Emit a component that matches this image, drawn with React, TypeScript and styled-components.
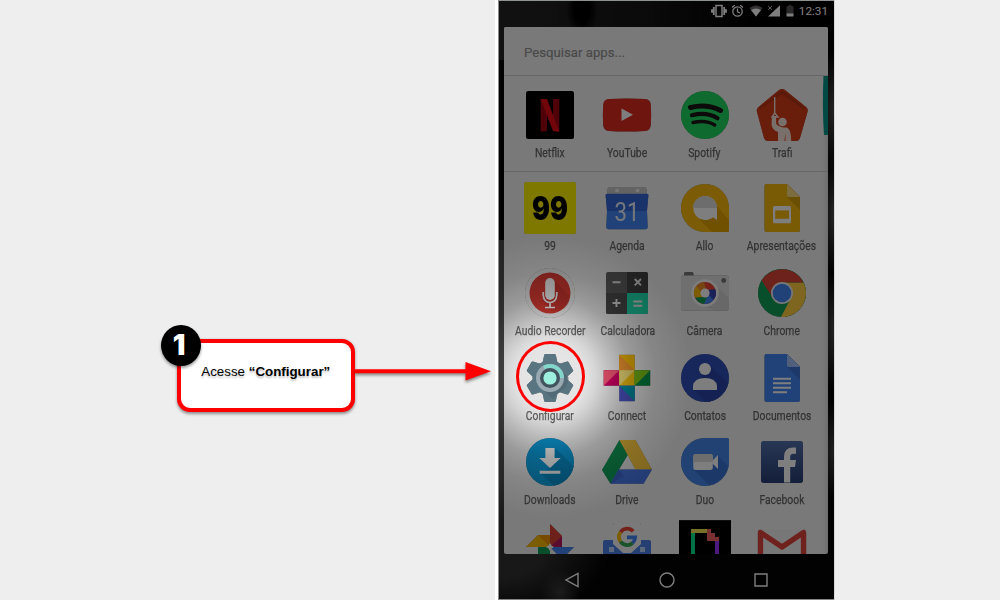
import React from "react";
import styled, { createGlobalStyle } from "styled-components";

const GlobalStyle = createGlobalStyle`
  * { box-sizing: border-box; }
  body { margin: 0; background: #eeeeee; overflow: hidden; }
`;

const Page = styled.main`
  display: grid;
  grid-template-columns: 495px 340px;
  width: 1000px;
  height: 600px;
  background: #eeeeee;
  font-family: Roboto, sans-serif;
`;

const Guide = styled.section`
  position: relative;
  z-index: 2;
  display: flex;
  align-items: flex-start;
  padding: 339px 0 0 177px;
`;

const Callout = styled.div`
  position: relative;
  flex: none;
  display: flex;
  align-items: center;
  justify-content: center;
  width: 177.5px;
  height: 72.5px;
  padding-bottom: 7px;
  background: #fff;
  border: 4px solid #ff0000;
  border-radius: 13px;
  box-shadow: 0 1.5px 3px rgba(0, 0, 0, 0.4);
`;

const CalloutText = styled.p`
  margin: 0;
  font: 13.35px "Liberation Sans", sans-serif;
  color: #000;
  white-space: nowrap;
  text-shadow: 0 2px 2px rgba(0, 0, 0, 0.25);
`;

const StepBadge = styled.span`
  position: absolute;
  left: -20px;
  top: -18px;
  display: flex;
  align-items: center;
  justify-content: center;
  width: 40px;
  height: 41px;
  padding: 0 4px 2px 0;
  border-radius: 50%;
  background: #000;
  color: #fff;
  font: 900 28px Inter, sans-serif;
  box-shadow: 0 2px 3px rgba(0, 0, 0, 0.4);
`;

const Arrow = styled.svg`
  flex: none;
  width: 137px;
  height: 26px;
  margin-top: 20px;
  filter: drop-shadow(0 2px 1.5px rgba(0, 0, 0, 0.45));
`;

const Phone = styled.section`
  position: relative;
  display: flex;
  flex-direction: column;
  height: 600px;
  overflow: hidden;
  border-left: 3px solid #fff;
  border-right: 1px solid #d8d8d8;
  background:
    radial-gradient(ellipse 20px 24px at 62px 592px, #383838, transparent),
    radial-gradient(ellipse 110px 70px at 0 550px, #303030 40%, transparent),
    radial-gradient(ellipse 12px 60px at 336px 215px, #4c4c4c, transparent),
    radial-gradient(ellipse 14px 60px at 336px 330px, #484848, transparent),
    radial-gradient(ellipse 14px 50px at 336px 450px, #404040, transparent),
    radial-gradient(ellipse 16px 60px at 336px 110px, #484848, transparent),
    linear-gradient(90deg, #484848 0 8px, transparent 8px) 0 240px / 100% 320px no-repeat,
    radial-gradient(ellipse 16px 26px at 84px 10px, #000 50%, transparent),
    linear-gradient(90deg, #242424, #141414 45%, #000 75%) 0 0 / 100% 60px no-repeat,
    #030303;
`;

const StatusBar = styled.header`
  display: flex;
  align-items: center;
  justify-content: flex-end;
  height: 26.5px;
  padding: 0 6px 4.5px 0;
  color: #fff;
  font-size: 11.8px;
  letter-spacing: -0.05px;
`;

const StatusIcons = styled.svg`
  width: 86px;
  height: 16px;
  margin-right: 2px;
`;

const Drawer = styled.div`
  position: relative;
  display: flex;
  flex-direction: column;
  height: 527px;
  margin: 0 6px 0 6px;
  overflow: hidden;
  border-radius: 2px;
  background: linear-gradient(90deg, #f5f5f5 0 318px, #e4e4e4 323px, #dadada);
`;

const Search = styled.div`
  flex: none;
  height: 49.5px;
  padding: 17px 20px;
  border-bottom: 1px solid #cecece;
  color: #949494;
  background: #f5f5f5;
  font-size: 13.2px;
  line-height: 17px;
  -webkit-text-stroke: 0.2px #949494;
`;

const ScrollThumb = styled.svg`
  position: absolute;
  right: 0;
  top: 49.5px;
  width: 6px;
  height: 59px;
`;

const AppGrid = styled.div<{ $suggested?: boolean }>`
  flex: none;
  display: grid;
  grid-template-columns: repeat(4, 77.25px);
  grid-auto-rows: 84.8px;
  justify-content: center;
  padding-top: ${(p) => (p.$suggested ? 11 : 8)}px;
  height: ${(p) => (p.$suggested ? "96px" : "auto")};
  border-bottom: ${(p) => (p.$suggested ? "1px solid #cecece" : "0")};
`;

const AppTile = styled.div`
  display: flex;
  flex-direction: column;
  align-items: center;
`;

const Icon = styled.svg`
  flex: none;
  width: 56px;
  height: 56px;
  filter: drop-shadow(0 0.7px 0.6px rgba(0, 0, 0, 0.45));
`;

const Label = styled.span`
  margin-top: 3px;
  font-size: 12.4px;
  line-height: 14px;
  white-space: nowrap;
  color: #666;
  -webkit-text-stroke: 0.25px #666;
  transform: scaleX(0.835);
`;

const NavBar = styled.nav`
  display: flex;
  justify-content: space-between;
  align-items: center;
  height: 46.5px;
  padding: 6px 65px 0 66px;
`;

const NavIcon = styled.svg`
  width: 16px;
  height: 16px;
  fill: none;
  stroke: #fff;
  stroke-width: 1.4;
`;

const Dim = styled.div`
  position: absolute;
  inset: 0;
  border-top: 1px solid #8e9290;
  border-bottom: 1px solid #858585;
  border-left: 1px solid #8a8a8a;
  background: radial-gradient(
    circle 140px at 52px 376px,
    rgba(0, 0, 0, 0.06) 0%,
    rgba(0, 0, 0, 0.07) 24%,
    rgba(0, 0, 0, 0.13) 32%,
    rgba(0, 0, 0, 0.24) 43%,
    rgba(0, 0, 0, 0.37) 57%,
    rgba(0, 0, 0, 0.455) 75%,
    rgba(0, 0, 0, 0.505) 100%
  );
`;

const Highlight = styled.div`
  position: absolute;
  left: 18px;
  top: 341px;
  width: 69px;
  height: 71px;
  border: 3px solid #ff0000;
  border-radius: 50%;
`;

const Mark = ({ children }: { children: React.ReactNode }) => (
  <Icon viewBox="-28 -28 56 56">{children}</Icon>
);

const gearTooth = "M-4.5-24H4.5Q5.5-24 5.8-23L7.8-14H-7.8L-5.8-23Q-5.5-24-4.5-24Z";

const Sheet = ({ fill, fold }: { fill: string; fold: string }) => (
  <>
    <path d="M-15.5-24H5L18-11V22Q18 24 16 24H-15.5Q-17.5 24-17.5 22V-22Q-17.5-24-15.5-24Z" fill={fill} />
    <path d="M5-11L18 2V-11Z" fill="#000" opacity=".13" />
    <path d="M5-24L18-11H7Q5-11 5-13Z" fill={fold} />
  </>
);

type AppEntry = { name?: string; icon: React.ReactNode };

const suggested: AppEntry[] = [
  {
    name: "Netflix",
    icon: (
      <>
        <rect x="-24" y="-24" width="48" height="48" rx="2.5" fill="#000" />
        <path d="M-9.3-16H-3V16L-9.3 16.8ZM3-16H9.3V16.8L3 16Z" fill="#a00610" />
        <path d="M-9.3-16H-3L9.3 16.8L3 16Z" fill="#e50914" />
      </>
    ),
  },
  {
    name: "YouTube",
    icon: (
      <>
        <path d="M-18-16Q0-17 18-16Q23.5-15.5 23.8-10Q24.5 0 23.8 10Q23.5 15.5 18 16Q0 17-18 16Q-23.5 15.5-23.8 10Q-24.5 0-23.8-10Q-23.5-15.5-18-16Z" fill="#e02a20" />
        <path d="M-5.5-6.5V6L6-.2Z" fill="#fff" />
      </>
    ),
  },
  {
    name: "Spotify",
    icon: (
      <>
        <circle r="24" fill="#1ed760" />
        <g fill="none" stroke="#191414" strokeLinecap="round">
          <path d="M-14.5-7.5Q2-11.5 15.5-4.5" strokeWidth="5" />
          <path d="M-13 .2Q2-3.3 12.5 3.2" strokeWidth="4.2" />
          <path d="M-12 7.5Q1 4.5 9.7 10" strokeWidth="3.4" />
        </g>
      </>
    ),
  },
  {
    name: "Trafi",
    icon: (
      <>
        <path d="M-3-25Q0-27 3-25L24-8Q26.5-6 25.5-3L18 23Q17 26 14 26H-14Q-17 26-18 23L-25-3Q-26-6-23.5-8Z" fill="#d53a16" />
        <path d="M-23-7L0-25L24-7L21-6L0-21L-21-6Z" fill="#b73514" />
        <path d="M-7.3-18V-2M-7.3-2L-10 2H-4Z" fill="none" stroke="#f5e0d9" strokeWidth="1.4" />
        <circle cx=".5" cy="7" r="4.3" fill="#f5e0d9" />
        <path d="M-10 1L-6 1L-5.8 9Q-3 12 1 12.5H5Q9 14 9.2 26H3.5V18L2.5 26H-4V17Q-10 15-10.5 9Z" fill="#f5e0d9" />
      </>
    ),
  },
];

const installed: AppEntry[] = [
  {
    name: "99",
    icon: (
      <>
        <rect x="-26" y="-26" width="52" height="52" rx="2.5" fill="#fff200" />
        <text x="-18" y="12" fontFamily="Inter, sans-serif" fontWeight="900" fontSize="32.5" textLength="36" lengthAdjust="spacingAndGlyphs" fill="#000">99</text>
      </>
    ),
  },
  {
    name: "Agenda",
    icon: (
      <>
        <path d="M-19.5-18Q-19.5-21-17-21H17Q19.5-21 19.5-18V-12H-19.5Z" fill="#c8c8c8" />
        <circle cx="-10" cy="-17.5" r="1.8" fill="#f3f3f3" />
        <circle cx="10.5" cy="-17.5" r="1.8" fill="#f3f3f3" />
        <path d="M-19.5-14.2H19.5Q22-14 21.3-11.5L20 3H-20L-21.3-11.5Q-22-14-19.5-14.2Z" fill="#3367d6" />
        <path d="M-20 3H20L20.7 19Q20.7 21.3 18.5 21.3H-18.5Q-20.7 21.3-20.7 19Z" fill="#4285f4" />
        <text x="-12.5" y="12.6" fontFamily="Roboto, sans-serif" fontWeight="400" fontSize="25" textLength="25" lengthAdjust="spacingAndGlyphs" fill="#e8effd">31</text>
      </>
    ),
  },
  {
    name: "Allo",
    icon: (
      <>
        <path d="M0-24A24 24 0 0 1 24 0V22Q24 24 22 24H0A24 24 0 0 1 0-24Z" fill="#fbb90c" />
        <path d="M-8 9L7 24H22Q24 24 24 22V12L10-4V10Z" fill="#e3a400" />
        <path d="M0-12A12 12 0 0 1 12 0V12L8 9.2A12 12 0 1 1 0-12Z" fill="#fff" />
        <path d="M-12 0A12 12 0 0 1 12 0Z" fill="#ddd" />
      </>
    ),
  },
  {
    name: "Apresentações",
    icon: (
      <>
        <Sheet fill="#f5b70b" fold="#fada80" />
        <rect x="-9" y="-2" width="18" height="17.3" rx="1.5" fill="#fff" />
        <rect x="-6.8" y="2.4" width="13.8" height="8.4" fill="#f5b70b" />
      </>
    ),
  },
  {
    name: "Audio Recorder",
    icon: (
      <>
        <circle r="25" fill="#f3f3f3" />
        <circle r="20.5" fill="#de3c34" />
        <path d="M4-13L19 2Q22 13 8 18L0 17L-7 8Z" fill="#a82924" opacity=".35" />
        <rect x="-4.8" y="-15" width="9.6" height="22" rx="4.8" fill="#fff" />
        <path d="M-6.8-1V2Q-6 9.5 0 9.5Q6 9.5 6.8 2V-1M0 9V14M-5 14.5H5" fill="none" stroke="#fff" strokeWidth="1.7" />
      </>
    ),
  },
  {
    name: "Calculadora",
    icon: (
      <>
        <rect x="-21" y="-21" width="42" height="42" rx="2.5" fill="#616161" />
        <path d="M0-21H18.5Q21-21 21-18.5V0H0Z" fill="#424242" />
        <path d="M-21 0H0V21H-18.5Q-21 21-21 18.5Z" fill="#4d4d4d" />
        <path d="M0 0H21V18.5Q21 21 18.5 21H0Z" fill="#1dd9aa" />
        <path d="M-14.5-10.8H-6.5M-14.5 10H-6.5M-10.5 6V14M7.7-14L14-7.7M14-14L7.7-7.7M6.3 8.5H15.3M6.3 12.7H15.3" stroke="#e8e8e8" strokeWidth="1.9" />
      </>
    ),
  },
  {
    name: "Câmera",
    icon: (
      <>
        <path d="M-21-14V-19Q-21-21-19-21H-13.5Q-11.5-21-11.5-19V-14Z" fill="#757575" />
        <rect x="-24" y="-17.5" width="48" height="35" rx="2.5" fill="#e0e0e0" />
        <path d="M10-8L24 5V15Q24 17.5 21.5 17.5H9L-8 10Z" fill="#d2d2d2" />
        <circle r="13.7" fill="#fafafa" />
        <circle r="11" fill="#ea4335" />
        <path d="M4-3L10.2-4A11 11 0 0 1 8.5 7L4 4Z" fill="#3445b4" />
        <path d="M4 2L8.5 7A11 11 0 0 1-1 11L0 4Z" fill="#4285f4" />
        <path d="M2 4L-1 11A11 11 0 0 1-10 4.5L-3 3Z" fill="#0f9d58" />
        <path d="M-2 4L-10 4.5A11 11 0 0 1-8.5-7L-4-2Z" fill="#fbbc05" />
        <path d="M-4-1L-8.5-7A11 11 0 0 1-1-11L1-4Z" fill="#ef8b24" />
        <circle r="4.6" fill="#fff" />
        <circle cx="18.7" cy="-12.5" r="2.4" fill="#757575" />
      </>
    ),
  },
  {
    name: "Chrome",
    icon: (
      <>
        <circle r="24" fill="#0f9d58" />
        <path d="M0-10.5H21.5A24 24 0 0 1-1 24L9 5Z" fill="#ffcd40" />
        <path d="M-20.4-12.5A24 24 0 0 1 21.5-10.5H0L-9 5Z" fill="#db4437" />
        <circle r="11" fill="#f1f1f1" />
        <circle r="9.3" fill="#4285f4" />
      </>
    ),
  },
  {
    name: "Configurar",
    icon: (
      <>
        <g fill="#607d8b">
          {[0, 60, 120, 180, 240, 300].map((a) => (
            <path key={a} d={gearTooth} transform={`rotate(${a})`} />
          ))}
          <circle r="17.5" />
        </g>
        <path d="M10-9L19 0L16 9L7 16L3 21L-10 9Z" fill="#455a64" opacity=".3" />
        <circle r="14" fill="#a3b4bd" />
        <path d="M-7-12.1A14 14 0 0 1 14 0H10A10 10 0 0 0-5-8.6Z" fill="#8ae5d8" />
        <circle r="10" fill="#455a64" />
        <circle r="6.6" fill="#a7ffeb" />
      </>
    ),
  },
  {
    name: "Connect",
    icon: (
      <>
        <path d="M-7.7-23.2H7.7V-7.7H-7.7Z" fill="#ffc107" />
        <path d="M-7.7-23.2L7.7-7.7H-7.7Z" fill="#ff9f32" />
        <path d="M-23.2-7.7H-7.7V7.7H-23.2Z" fill="#d50065" />
        <path d="M-23.2-7.7H-7.7L-23.2 7.7Z" fill="#ff5877" />
        <path d="M-7.7-7.7H7.7V7.7H-7.7Z" fill="#fcc910" />
        <path d="M-7.7-7.7H7.7L-7.7 7.7Z" fill="#ffeb80" />
        <path d="M7.7-7.7H23.2V7.7H7.7Z" fill="#078d46" />
        <path d="M7.7-7.7H23.2L7.7 7.7Z" fill="#7fc316" />
        <path d="M-7.7 7.7H7.7V23.2H-7.7Z" fill="#5157cd" />
        <path d="M-7.7 7.7H7.7V23.2Z" fill="#0095a8" />
      </>
    ),
  },
  {
    name: "Contatos",
    icon: (
      <>
        <circle r="24" fill="#2e4cb8" />
        <path d="M4-13L23 5A24 24 0 0 1 1 24L-11 12Z" fill="#2843a6" />
        <circle cy="-9" r="6" fill="#fff" />
        <path d="M-12 12V8Q-11 0 0 0Q11 0 12 8V12Z" fill="#fff" />
      </>
    ),
  },
  {
    name: "Documentos",
    icon: (
      <>
        <Sheet fill="#4285f4" fold="#a1c2fa" />
        <path d="M-9 .8H9M-9 5.2H9M-9 9.8H9M-9 14.2H5" stroke="#fff" strokeWidth="2" />
      </>
    ),
  },
  {
    name: "Downloads",
    icon: (
      <>
        <circle r="24" fill="#0c9ddb" />
        <path d="M5-14L23.5 4A24 24 0 0 1 4 23.5L-10 11L0 6Z" fill="#0789c3" />
        <path d="M-4.6-14H4.6V-4H10.7L0 6L-10.7-4H-4.6ZM-10.3 8.8H10.3V11.8H-10.3Z" fill="#fff" />
      </>
    ),
  },
  {
    name: "Drive",
    icon: (
      <>
        <path d="M-7.5-22L-25 8L-16.5 21.7L1-7.5Z" fill="#109d59" />
        <path d="M-7.5-22H8.5L25 7.5H8.5Z" fill="#ffcd40" />
        <path d="M-16.5 21.7L-8.5 7.5H25L16.5 21.7Z" fill="#4878e8" />
        <path d="M-16.5 21.7L-8.5 7.5L-3 14Z" fill="#3d68cf" />
      </>
    ),
  },
  {
    name: "Duo",
    icon: (
      <>
        <path d="M0-24H22Q24-24 24-22V0A24 24 0 1 1 0-24Z" fill="#4285e9" />
        <path d="M13-6L23 4A24 24 0 0 1 4 23L-11 8Z" fill="#3672d3" />
        <rect x="-11.7" y="-8" width="19.5" height="16" rx="2.5" fill="#fff" />
        <path d="M7-1L13-7V7L7 1Z" fill="#fff" />
        <path d="M-11.7 0V-5.5Q-11.7-8-9.2-8H5.3Q7.8-8 7.8-5.5V0Z" fill="#ddd" />
      </>
    ),
  },
  {
    name: "Facebook",
    icon: (
      <>
        <defs>
          <linearGradient id="fb" x2="0" y2="1">
            <stop stopColor="#506faa" />
            <stop offset="1" stopColor="#263d75" />
          </linearGradient>
        </defs>
        <rect x="-21" y="-21" width="42" height="42" rx="3" fill="url(#fb)" />
        <path d="M2 20.5V5H-4V-2H2V-5Q2-14.5 11-14.5H14V-8.2H11.5Q8.2-8.2 8.2-5V-2H14L13 5H8.2V20.5Z" fill="#fff" />
      </>
    ),
  },
  {
    icon: (
      <>
        <path d="M0-23L12-11V0H0Z" fill="#db4437" />
        <path d="M0 0L12-11V0Z" fill="#b5195c" />
        <path d="M-12-12H0V0H-24Z" fill="#fbbc05" />
        <path d="M-12-12H0V0Z" fill="#ef9800" />
        <path d="M0 0H24L12 12Z" fill="#4285f4" />
        <path d="M-12 0H0V24L-12 12Z" fill="#0f9d58" />
        <path d="M0-4L1.5-1.5L4 0L1.5 1.5L0 4L-1.5 1.5L-4 0L-1.5-1.5Z" fill="#fff" />
      </>
    ),
  },
  {
    icon: (
      <>
        <path d="M-21.5-7H21.5Q24-7 24-4.5V20H-24V-4.5Q-24-7-21.5-7Z" fill="#4a80e8" />
        <path d="M-18 0H-13V5H-18ZM13 0H18V5H13Z" fill="#b9d2fb" />
        <path d="M-14-22Q-14-24-12-24H12Q14-24 14-22V-3L4 6H-4L-14-3Z" fill="#f7f7f7" />
        <g fill="none" strokeWidth="3.8">
          <path d="M6.2-15.7A8 8 0 0 0-6.5-14.8" stroke="#ea4335" />
          <path d="M-6.5-14.8A8 8 0 0 0-6.5-5.5" stroke="#fbbc05" />
          <path d="M-6.5-5.5A8 8 0 0 0 5.5-4" stroke="#34a853" />
          <path d="M5.5-4A8 8 0 0 0 8.2-9.7H0" stroke="#4285f4" />
        </g>
      </>
    ),
  },
  {
    icon: (
      <>
        <rect x="-26" y="-26.8" width="52" height="54" fill="#000" />
        <path d="M-14-18H2V-14H-14Z" fill="#f0e250" />
        <path d="M-14-14H-10V20H-14Z" fill="#00e68a" />
        <path d="M2-18H6V-14H10V-10H14V-6H2Z" fill="#f26161" />
        <path d="M10-6H14V20H10Z" fill="#9933ff" />
      </>
    ),
  },
  {
    icon: (
      <>
        <rect x="-24" y="-18" width="48" height="40" rx="3" fill="#f0f0f0" />
        <path d="M-21.5 18V-14.5L0 0L21.5-14.5V18" fill="none" stroke="#e0443b" strokeWidth="5.3" strokeLinejoin="round" />
      </>
    ),
  },
];

const Apps = ({ apps, lead }: { apps: AppEntry[]; lead?: boolean }) => (
  <AppGrid $suggested={lead}>
    {apps.map((app, i) => (
      <AppTile key={i}>
        <Mark>{app.icon}</Mark>
        {app.name && <Label>{app.name}</Label>}
      </AppTile>
    ))}
  </AppGrid>
);

export default function App() {
  return (
    <>
      <GlobalStyle />
      <Page>
        <Guide>
          <Callout>
            <CalloutText>
              Acesse <b>“Configurar”</b>
            </CalloutText>
            <StepBadge>1</StepBadge>
          </Callout>
          <Arrow viewBox="0 0 137 26">
            <path d="M0 10.3H110.5V3L136 12.2L110.5 21.5V14.3H0Z" fill="#ff0000" />
          </Arrow>
        </Guide>
        <Phone>
          <StatusBar>
            <StatusIcons viewBox="0 0 86 16">
              <path d="M5 2.5H11V13.5H5Z" fill="none" stroke="#fff" strokeWidth="1.5" />
              <path d="M2.8 4V12M13.2 4V12M1 6.2V9.8M15 6.2V9.8" stroke="#fff" strokeWidth="1.8" />
              <g fill="none" stroke="#fff" strokeWidth="1.3">
                <circle cx="26.5" cy="8.5" r="4.7" />
                <path d="M26.5 5.5V8.8L29 10M21 4.5L23.8 2.3M32 4.5L29.2 2.3" />
              </g>
              <path d="M38.5 5Q45 0 51.5 5L45 13.5Z" fill="#666" />
              <path d="M40 7Q45 4 50 7L45 13.5Z" fill="#fff" />
              <path d="M57 13.5H69V2.2Z" fill="#fff" />
              <path d="M57.2 3L61 6.8M61 3L57.2 6.8" stroke="#bbb" />
              <path d="M75.5 3.2H77.5V2H80.5V3.2H82.5V11H75.5Z" fill="#555" />
              <path d="M75.5 10.5H82.5V13.5H75.5Z" fill="#fff" />
            </StatusIcons>
            12:31
          </StatusBar>
          <Drawer>
            <Search>Pesquisar apps...</Search>
            <Apps apps={suggested} lead />
            <Apps apps={installed} />
            <ScrollThumb viewBox="0 0 6 59">
              <path d="M1.5 0H6V59H2Q0 30 1.5 0Z" fill="#009688" />
            </ScrollThumb>
          </Drawer>
          <NavBar>
            <NavIcon viewBox="0 0 16 16"><path d="M14 1.5V14.5L2 8Z" /></NavIcon>
            <NavIcon viewBox="0 0 16 16"><circle cx="8" cy="8" r="7" /></NavIcon>
            <NavIcon viewBox="0 0 16 16"><path d="M2 2H14V14H2Z" /></NavIcon>
          </NavBar>
          <Dim />
          <Highlight />
        </Phone>
      </Page>
    </>
  );
}
